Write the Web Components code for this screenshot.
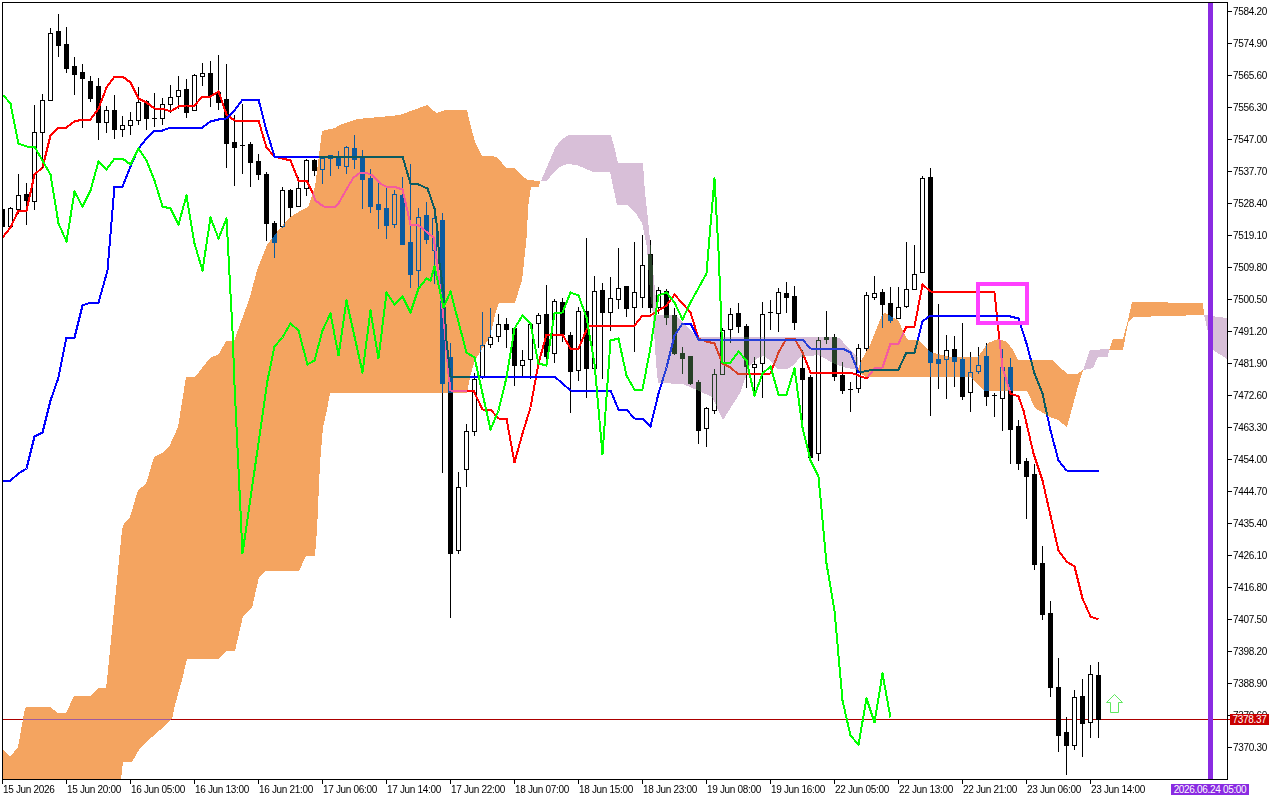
<!DOCTYPE html>
<html><head><meta charset="utf-8"><title>Chart</title>
<style>html,body{margin:0;background:#fff;}body{width:1280px;height:800px;overflow:hidden;font:10px "Liberation Sans",sans-serif;color:#000;}</style>
</head><body>
<mt-terminal>
  <mt-plot slot="plot"></mt-plot>
  <mt-price-axis slot="prices" tag="7378.37" tag-y="719">
    <mt-price>7584.20</mt-price><mt-price>7574.90</mt-price><mt-price>7565.60</mt-price><mt-price>7556.30</mt-price>
    <mt-price>7547.00</mt-price><mt-price>7537.70</mt-price><mt-price>7528.40</mt-price><mt-price>7519.10</mt-price>
    <mt-price>7509.80</mt-price><mt-price>7500.50</mt-price><mt-price>7491.20</mt-price><mt-price>7481.90</mt-price>
    <mt-price>7472.60</mt-price><mt-price>7463.30</mt-price><mt-price>7454.00</mt-price><mt-price>7444.70</mt-price>
    <mt-price>7435.40</mt-price><mt-price>7426.10</mt-price><mt-price>7416.80</mt-price><mt-price>7407.50</mt-price>
    <mt-price>7398.20</mt-price><mt-price>7388.90</mt-price><mt-price>7379.60</mt-price><mt-price>7370.30</mt-price>
  </mt-price-axis>
  <mt-time-axis slot="times" tag="2026.06.24 05:00">
    <mt-time>15 Jun 2026</mt-time><mt-time>15 Jun 20:00</mt-time><mt-time>16 Jun 05:00</mt-time><mt-time>16 Jun 13:00</mt-time>
    <mt-time>16 Jun 21:00</mt-time><mt-time>17 Jun 06:00</mt-time><mt-time>17 Jun 14:00</mt-time><mt-time>17 Jun 22:00</mt-time>
    <mt-time>18 Jun 07:00</mt-time><mt-time>18 Jun 15:00</mt-time><mt-time>18 Jun 23:00</mt-time><mt-time>19 Jun 08:00</mt-time>
    <mt-time>19 Jun 16:00</mt-time><mt-time>22 Jun 05:00</mt-time><mt-time>22 Jun 13:00</mt-time><mt-time>22 Jun 21:00</mt-time>
    <mt-time>23 Jun 06:00</mt-time><mt-time>23 Jun 14:00</mt-time>
  </mt-time-axis>
</mt-terminal>
<script>
const FONT='font:10px "Liberation Sans",sans-serif;letter-spacing:-.32px;';
class Base extends HTMLElement{
  constructor(){super();this.attachShadow({mode:'open'});}
}
class MtTerminal extends Base{
  connectedCallback(){this.shadowRoot.innerHTML=`<style>
  :host{display:grid;grid-template-columns:1226px 52px;grid-template-rows:778px 20px;padding:2px 0 0 2px;width:1278px;height:798px;box-sizing:border-box;background:#fff}
  </style><slot name="plot"></slot><slot name="prices"></slot><slot name="times"></slot>`;}
}
class MtPrice extends Base{
  connectedCallback(){this.shadowRoot.innerHTML=`<style>
  :host{display:flex;align-items:center;gap:1px;height:32px;flex:none;${FONT}color:#000;white-space:nowrap}
  i{display:block;width:4px;height:1px;background:#000;flex:none}
  </style><i></i><slot></slot>`;}
}
class MtPriceAxis extends Base{
  connectedCallback(){
    const y=+this.getAttribute('tag-y'), tag=this.getAttribute('tag');
    this.shadowRoot.innerHTML=`<style>
    :host{display:block;position:relative;height:778px;overflow:visible}
    .rows{display:flex;flex-direction:column;margin-top:-7px}
    .tag{position:absolute;left:2px;top:${y-2-5}px;width:39px;height:11px;background:#c80000;color:#fff;${FONT}line-height:11px;text-align:center}
    .tick{position:absolute;left:0;top:${y-2}px;width:2px;height:1px;background:#c80000}
    </style><div class="rows"><slot></slot></div><div class="tick"></div><div class="tag">${tag}</div>`;
  }
}
class MtTime extends Base{
  connectedCallback(){this.shadowRoot.innerHTML=`<style>
  :host{display:block;width:64px;flex:none;${FONT}color:#000;white-space:nowrap}
  i{display:block;width:1px;height:4px;background:#000}
  span{display:block;padding-left:1px;line-height:12px}
  </style><i></i><span><slot></slot></span>`;}
}
class MtTimeAxis extends Base{
  connectedCallback(){
    this.shadowRoot.innerHTML=`<style>
    :host{display:block;position:relative;grid-column:1 / span 2;height:20px}
    .cols{display:flex}
    .tag{position:absolute;left:1169px;top:4px;width:78px;height:11px;background:#8a2be2;color:#fff;${FONT}line-height:11px;text-align:center;white-space:nowrap}
    </style><div class="cols"><slot></slot></div><div class="tag">${this.getAttribute('tag')}</div>`;
  }
}
/* [high, low, bodyTop, bodyBottom, white?] one per bar, x = 2 + 8*i */
const BARS=[[207,228,209,226,0],[207,228,208,226,1],[174,213,195,209,1],[183,224,194,200,0],[105,209,132,201,1],[94,167,100,132,1],[28,100,33,100,1],[14,56,31,45,0],[27,72,44,68,0],[57,94,66,74,0],
[64,127,72,78,0],[76,101,81,98,0],[78,139,86,122,0],[106,132,110,122,1],[95,138,110,129,0],[116,136,125,129,1],[112,134,120,125,1],[87,124,102,120,1],[100,129,101,118,0],[93,126,118,118,0],
[98,124,104,118,1],[85,112,97,104,1],[76,108,90,96,1],[79,117,89,112,0],[74,110,75,110,1],[63,85,73,76,1],[61,106,73,95,0],[55,109,92,102,0],[64,167,99,143,0],[115,185,142,147,0],
[104,173,145,145,0],[142,186,144,162,0],[154,179,161,174,0],[172,240,174,223,0],[221,257,223,242,0],[187,227,190,226,1],[189,216,190,207,0],[177,206,188,206,1],[159,195,160,188,1],[159,175,160,170,0],
[157,183,158,169,1],[155,175,155,158,0],[151,168,157,165,0],[146,173,147,166,1],[135,168,148,159,0],[150,208,158,179,0],[169,212,178,206,0],[182,228,204,209,0],[187,238,208,225,0],[190,227,194,224,1],
[177,244,195,244,0],[164,287,242,274,0],[208,289,217,270,1],[202,243,215,239,0],[210,283,218,250,1],[213,472,220,383,0],[343,617,357,553,0],[472,553,487,550,1],[424,486,431,469,1],[373,435,379,431,1],
[312,378,345,377,1],[308,347,337,344,1],[314,341,324,336,1],[318,347,324,329,0],[328,385,328,365,0],[350,377,360,365,1],[323,378,324,359,1],[313,347,315,323,1],[285,362,314,356,0],[299,362,301,353,1],
[298,341,302,334,0],[332,412,335,371,0],[307,380,311,370,1],[238,397,311,368,0],[276,370,291,368,1],[283,378,290,312,0],[277,330,298,312,1],[248,308,288,299,1],[286,316,286,308,0],[242,351,292,307,1],
[235,307,265,297,1],[240,312,254,307,0],[287,313,290,307,1],[289,324,291,317,0],[308,354,315,353,0],[347,373,353,358,0],[356,384,356,383,0],[380,443,382,430,0],[407,446,408,428,1],[369,413,374,410,1],
[328,374,330,374,1],[308,342,314,329,1],[303,332,313,326,0],[324,387,326,366,0],[357,390,364,367,1],[302,397,314,363,1],[300,329,312,312,0],[288,331,292,313,1],[282,312,293,297,0],[286,329,296,322,0],
[350,420,368,379,0],[375,460,377,457,0],[337,460,340,453,1],[311,343,337,339,0],[334,380,337,376,0],[362,393,375,390,0],[382,411,389,389,0],[344,392,348,388,1],[292,350,295,348,1],[276,299,293,297,1],
[289,327,292,304,0],[287,322,303,320,0],[287,318,307,318,1],[242,307,289,306,1],[245,289,274,289,1],[176,272,178,272,1],[168,415,177,362,0],[304,388,359,363,0],[335,398,350,359,1],[336,386,349,361,0],
[323,399,359,396,0],[352,411,372,392,1],[347,373,365,371,1],[343,405,356,396,0],[393,416,395,395,0],[349,430,367,398,1],[358,463,367,429,0],[420,469,426,463,0],[458,518,461,476,0],[464,569,474,564,0],
[546,619,563,614,0],[601,696,613,687,0],[658,751,687,735,0],[717,774,732,745,0],[690,749,697,745,1],[679,756,696,723,0],[665,737,674,722,1],[662,737,675,719,0]];
const RED=[[2,237],[10,227],[18,210],[26,210],[34,174],[42,167],[50,135],[58,127],[66,127],[74,121],[82,119],[90,119],[98,108],[106,87],[114,76],[122,76],[130,82],[138,98],[146,102],[154,108],[162,108],[170,111],[178,106],[186,105],[194,105],[202,96],[210,96],[218,91],[226,114],[234,120],[258,120],[266,147],[274,156],[282,158],[290,160],[298,180],[306,180],[312,192],[315,200],[323,206],[335,206],[338,203],[347,187],[353,177],[360,172],[365,172],[372,175],[380,183],[385,186],[393,186],[402,189],[405,202],[410,224],[417,224],[433,237],[435,250],[443,317],[446,350],[448,373],[450,390],[473,390],[482,409],[490,409],[498,418],[506,418],[514,462],[522,433],[530,407],[538,363],[546,334],[562,334],[570,348],[578,348],[588,325],[634,325],[642,315],[650,315],[658,310],[666,305],[674,294],[682,303],[690,312],[698,338],[706,341],[714,343],[722,363],[730,367],[738,374],[770,373],[778,352],[786,338],[794,338],[802,352],[810,372],[850,372],[866,378],[874,368],[882,367],[890,343],[898,343],[906,326],[914,326],[922,284],[930,291],[987,291],[994,292],[998,330],[1002,367],[1010,393],[1018,396],[1023,410],[1033,453],[1042,480],[1050,515],[1058,550],[1066,561],[1074,566],[1082,598],[1090,616],[1098,619]];
const BLUE=[[2,480],[10,480],[18,473],[26,468],[34,436],[42,432],[50,400],[58,377],[66,337],[74,337],[82,305],[90,302],[98,302],[107,270],[114,186],[122,186],[130,166],[138,148],[146,138],[154,130],[162,130],[170,127],[202,127],[210,121],[218,119],[226,118],[234,110],[242,99],[258,99],[266,130],[274,156],[402,156],[410,183],[418,184],[427,188],[434,208],[437,230],[439,263],[443,290],[446,340],[450,376],[554,376],[570,390],[610,390],[618,409],[626,409],[634,418],[642,418],[650,426],[658,393],[666,367],[674,335],[682,323],[690,323],[698,339],[802,339],[810,348],[842,348],[850,352],[858,372],[874,369],[898,369],[906,352],[914,352],[922,321],[930,315],[1002,315],[1010,316],[1018,318],[1026,343],[1034,373],[1042,393],[1050,430],[1058,460],[1066,470],[1098,470]];
const GREEN=[[3,95],[10,103],[18,143],[26,146],[34,146],[42,160],[50,174],[58,223],[66,241],[74,191],[82,206],[90,190],[98,161],[106,169],[114,158],[122,158],[130,164],[138,148],[146,160],[154,180],[162,206],[170,208],[178,224],[186,195],[194,243],[202,270],[210,217],[218,238],[226,218],[232,330],[234,384],[242,553],[267,380],[274,346],[282,337],[290,323],[298,330],[307,364],[314,360],[322,330],[330,313],[338,355],[346,300],[354,336],[362,372],[370,310],[378,358],[386,292],[394,304],[402,296],[410,312],[418,288],[426,278],[430,280],[434,266],[443,307],[450,291],[466,352],[474,357],[490,429],[498,410],[506,377],[514,328],[522,315],[530,323],[538,363],[546,365],[554,313],[562,312],[570,292],[578,295],[586,317],[594,363],[602,454],[610,340],[618,338],[626,375],[634,389],[642,389],[650,347],[658,295],[666,292],[674,302],[682,319],[690,302],[706,273],[710,225],[714,178],[718,250],[720,300],[722,362],[730,362],[738,351],[746,360],[754,395],[762,373],[770,366],[778,394],[786,394],[794,368],[802,427],[810,460],[818,476],[826,563],[834,610],[842,700],[850,735],[858,744],[866,698],[874,722],[882,673],[890,717]];
const ORANGE=[
[[3,750],[10,757],[18,747],[25,708],[26,707],[50,707],[58,713],[66,713],[74,696],[90,696],[98,688],[106,688],[107,680],[122,530],[124,524],[130,517],[138,490],[146,484],[154,457],[162,453],[169,447],[178,427],[186,377],[195,377],[210,358],[219,354],[226,341],[234,341],[250,297],[257,270],[267,245],[277,232],[290,217],[302,210],[308,207],[315,187],[322,131],[335,128],[340,125],[357,119],[380,117],[400,115],[427,105],[430,108],[437,113],[445,110],[467,110],[470,123],[475,142],[482,156],[492,156],[498,158],[506,168],[515,168],[522,176],[528,180],[540,181],[539,187],[531,187],[528,207],[527,233],[523,272],[522,280],[515,303],[499,303],[495,315],[490,337],[475,360],[470,377],[467,393],[330,393],[327,410],[323,427],[320,463],[317,530],[315,556],[306,556],[299,571],[266,571],[259,577],[252,608],[243,616],[235,651],[226,651],[219,659],[187,659],[182,680],[175,705],[172,719],[160,730],[152,737],[140,748],[132,762],[123,762],[121,779],[3,779]],
[[858,370],[860,363],[870,345],[882,315],[885,313],[898,320],[905,335],[908,340],[918,340],[930,352],[950,357],[978,357],[988,343],[998,339],[1007,342],[1013,350],[1018,360],[1052,360],[1063,370],[1067,374],[1077,374],[1083,370],[1077,390],[1067,427],[1058,420],[1050,417],[1035,408],[1027,391],[985,391],[970,377],[866,377],[860,373]],
[[1109,350],[1113,339],[1123,339],[1128,320],[1132,302],[1203,303],[1204,315],[1133,317],[1128,323],[1123,350]]];
const THISTLE=[
[[541,181],[550,160],[555,148],[562,139],[569,135],[611,135],[615,150],[618,163],[643,163],[645,193],[647,210],[650,240],[653,270],[656,300],[657,315],[675,315],[683,323],[698,337],[833,337],[840,338],[847,347],[858,358],[858,370],[847,368],[837,365],[818,355],[800,357],[794,365],[787,369],[777,369],[770,360],[763,356],[757,358],[750,365],[740,393],[723,420],[712,397],[697,390],[683,384],[658,383],[656,363],[653,315],[650,293],[647,247],[642,223],[635,212],[627,205],[617,205],[610,172],[593,172],[577,165],[567,164],[560,167],[553,173],[547,181]],
[[1083,370],[1090,350],[1109,349],[1108,357],[1098,357],[1093,368]],
[[1204,315],[1227,318],[1227,359],[1213,350],[1208,332]]];
class MtPlot extends Base{
  connectedCallback(){
    const pts=a=>a.map(p=>(p[0]+.5)+','+(p[1]+.5)).join(' ');
    const line=(a,c)=>`<polyline points="${pts(a)}" fill="none" stroke="${c}" stroke-width="2" stroke-linejoin="round"/>`;
    const polys=(l,c)=>l.map(a=>`<polygon points="${a.map(p=>p.join(',')).join(' ')}" fill="${c}"/>`).join('');
    let bars='';
    BARS.forEach((b,i)=>{
      const x=2+8*i,[h,l,t,u,w]=b;
      bars+=`<rect x="${x}" y="${h}" width="1" height="${l-h+1}" fill="#000"/>`;
      bars+=`<rect x="${x-2}" y="${t}" width="5" height="${u-t+1}" fill="#000"/>`;
      if(w&&u-t>1)bars+=`<rect x="${x-1}" y="${t+1}" width="3" height="${u-t-1}" fill="#fff"/>`;
    });
    this.shadowRoot.innerHTML=`<style>
    :host{display:block;width:1226px;height:778px;box-sizing:border-box;border:1px solid #000}
    svg{display:block;width:1224px;height:776px;shape-rendering:crispEdges}
    .cloud{mix-blend-mode:difference}
    </style>
    <svg viewBox="3 3 1224 776" xmlns="http://www.w3.org/2000/svg">
      <rect x="3" y="3" width="1224" height="776" fill="#fff"/>
      <rect x="3" y="719" width="1224" height="1" fill="#ab0000"/>
      ${bars}
      ${line(RED,'#ff0000')}
      ${line(BLUE,'#0000ff')}
      <g class="cloud">${polys(ORANGE,'#0b5b9f')}${polys(THISTLE,'#274027')}</g>
      ${line(GREEN,'#00ff00')}
      <rect x="978" y="284" width="49" height="39" fill="none" stroke="#ff40ff" stroke-width="4"/>
      <rect x="1208" y="3" width="5" height="776" fill="#8a2be2"/>
      <path d="M1114.5 694.5 L1122.5 702.5 H1118.5 V712.5 H1110.5 V702.5 H1106.5 Z" fill="#fff" stroke="#5fe85f" stroke-width="1" style="shape-rendering:geometricPrecision"/>
    </svg>`;
  }
}
customElements.define('mt-terminal',MtTerminal);
customElements.define('mt-price',MtPrice);
customElements.define('mt-price-axis',MtPriceAxis);
customElements.define('mt-time',MtTime);
customElements.define('mt-time-axis',MtTimeAxis);
customElements.define('mt-plot',MtPlot);
</script>
</body></html>
